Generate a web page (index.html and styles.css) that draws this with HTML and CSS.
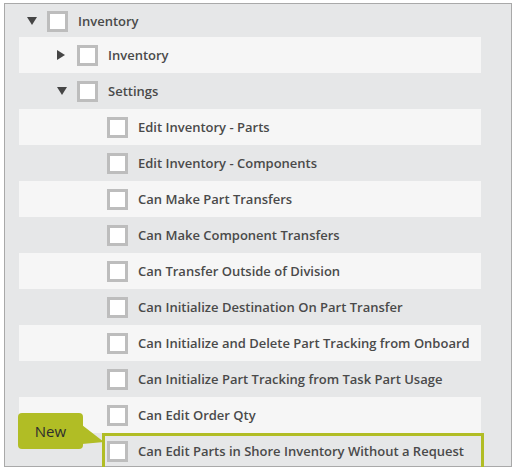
FILE: index.html
```html
<!DOCTYPE html>
<html>

<head>
    <title>Permissions - Inventory</title>
    <link rel="stylesheet" href="styles.css">
</head>

<body>
    <div class="tree">
        <div class="row row-top level-0">
            <span class="toggle open"></span>
            <span class="check"></span>
            <span class="label">Inventory</span>
        </div>
        <div class="row level-1">
            <span class="toggle closed"></span>
            <span class="check"></span>
            <span class="label">Inventory</span>
        </div>
        <div class="row level-1">
            <span class="toggle open"></span>
            <span class="check"></span>
            <span class="label">Settings</span>
        </div>
        <div class="row level-2">
            <span class="toggle"></span>
            <span class="check"></span>
            <span class="label">Edit Inventory - Parts</span>
        </div>
        <div class="row level-2">
            <span class="toggle"></span>
            <span class="check"></span>
            <span class="label">Edit Inventory - Components</span>
        </div>
        <div class="row level-2">
            <span class="toggle"></span>
            <span class="check"></span>
            <span class="label">Can Make Part Transfers</span>
        </div>
        <div class="row level-2">
            <span class="toggle"></span>
            <span class="check"></span>
            <span class="label">Can Make Component Transfers</span>
        </div>
        <div class="row level-2">
            <span class="toggle"></span>
            <span class="check"></span>
            <span class="label">Can Transfer Outside of Division</span>
        </div>
        <div class="row level-2">
            <span class="toggle"></span>
            <span class="check"></span>
            <span class="label">Can Initialize Destination On Part Transfer</span>
        </div>
        <div class="row level-2">
            <span class="toggle"></span>
            <span class="check"></span>
            <span class="label">Can Initialize and Delete Part Tracking from Onboard</span>
        </div>
        <div class="row level-2">
            <span class="toggle"></span>
            <span class="check"></span>
            <span class="label">Can Initialize Part Tracking from Task Part Usage</span>
        </div>
        <div class="row level-2">
            <span class="toggle"></span>
            <span class="check"></span>
            <span class="label">Can Edit Order Qty</span>
        </div>
        <div class="row level-2 is-new">
            <span class="toggle"></span>
            <span class="check"></span>
            <span class="label">Can Edit Parts in Shore Inventory Without a Request</span>
            <span class="highlight"></span>
            <span class="callout">New</span>
            <svg class="callout-tail" width="24" height="22" viewBox="0 0 24 22">
                <polygon points="0,0 22,17 0,19" fill="#b1bd25" />
            </svg>
        </div>
    </div>
</body>

</html>
```

FILE: styles.css
```css
body {
    margin: 0;
    font-family: "Open Sans", Arial, sans-serif;
    background-color: #ffffff;
}

.tree {
    box-sizing: border-box;
    width: 508px;
    height: 464px;
    margin: 3px 0 0 4px;
    padding: 0 30px 0 14px;
    border: 1px solid #a9a9a9;
    background-color: #e6e7e8;
}

.row {
    position: relative;
    display: flex;
    align-items: center;
    height: 36px;
    padding-left: 8px;
}

.row:nth-child(even) {
    background-color: #f6f6f6;
}

.row-top {
    height: 32px;
    padding-top: 1px;
}

.level-1 {
    padding-left: 38px;
}

.level-2 {
    padding-left: 68px;
}

/* expand / collapse arrows */
.toggle {
    width: 20px;
    height: 10px;
    flex-shrink: 0;
    position: relative;
}

.toggle.open::before {
    content: "";
    position: absolute;
    left: 0;
    top: 1px;
    border-top: 8px solid #454545;
    border-left: 5px solid transparent;
    border-right: 5px solid transparent;
}

.toggle.closed::before {
    content: "";
    position: absolute;
    left: 0;
    top: 0;
    border-left: 8px solid #454545;
    border-top: 5px solid transparent;
    border-bottom: 5px solid transparent;
}

.check {
    width: 21px;
    height: 21px;
    box-sizing: border-box;
    border: 3px solid #bdbdbd;
    background-color: #ffffff;
    flex-shrink: 0;
    margin-right: 10px;
}

.label {
    font-size: 13px;
    font-weight: 600;
    color: #4a4a4a;
    white-space: nowrap;
}

/* "New" marker */
.highlight {
    position: absolute;
    left: 83px;
    top: 0;
    right: -3px;
    bottom: -2px;
    border: 3px solid #b1bd25;
}

.callout {
    position: absolute;
    left: -1px;
    top: -20px;
    width: 65px;
    height: 36px;
    line-height: 36px;
    border-radius: 4px;
    background-color: #b1bd25;
    color: #2e2e2e;
    font-size: 15px;
    text-align: center;
}

.callout-tail {
    position: absolute;
    left: 63px;
    top: -8px;
}
```
